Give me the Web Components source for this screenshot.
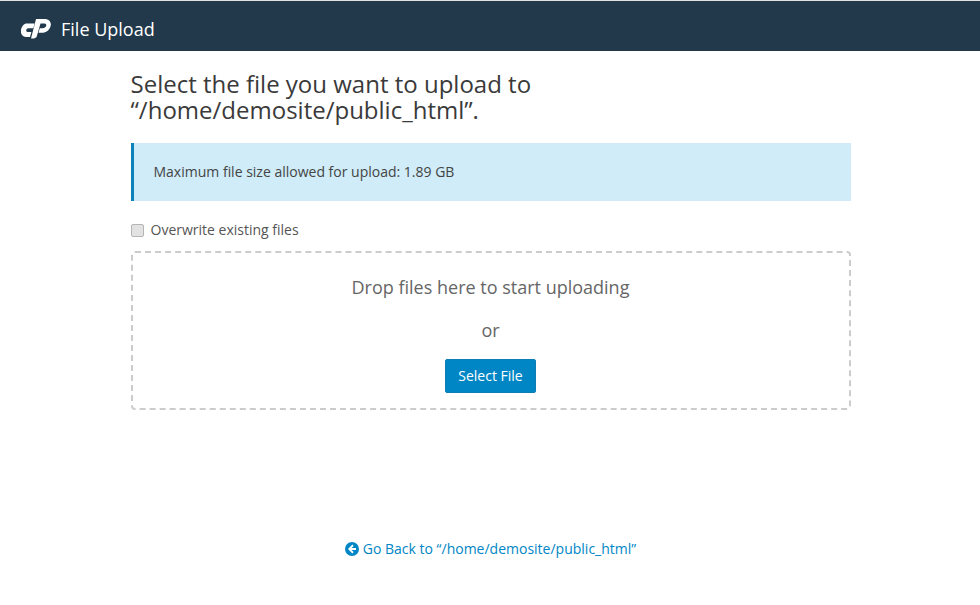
<!DOCTYPE html>
<html>
<head>
<meta charset="utf-8">
<title>File Upload</title>
<style>
    html, body { margin: 0; padding: 0; background: #fff; }
    body { font-family: "Open Sans", sans-serif; font-size: 14px; color: #333; }
</style>
</head>
<body>
<cp-topbar>File Upload</cp-topbar>
<upload-page>
    <upload-heading>Select the file you want to upload to “/home/demosite/public_html”.</upload-heading>
    <info-alert>Maximum file size allowed for upload: 1.89 GB</info-alert>
    <check-option>Overwrite existing files</check-option>
    <drop-zone button="Select File">Drop files here to start uploading</drop-zone>
    <back-link>Go Back to “/home/demosite/public_html”</back-link>
</upload-page>

<script>
class CpTopbar extends HTMLElement {
    constructor() {
        super();
        this.attachShadow({ mode: 'open' });
    }

    connectedCallback() {
        this.shadowRoot.innerHTML = `
            <style>
                :host {
                    display: flex;
                    align-items: center;
                    box-sizing: border-box;
                    height: 51px;
                    padding: 6px 0 0 21px;
                    background-color: #22394b;
                    border-top: 1px solid #e0e0e0;
                    color: #fff;
                    font-size: 18px;
                }
                svg { display: block; width: 30px; height: 20px; margin-right: 10px; }
                span { line-height: 24px; }
            </style>
            <svg viewBox="0 0 30 20" aria-hidden="true">
                <path fill="#fff" d="M5.8 4.5H13.6L12.3 9.2H7.2C6.2 9.2 5.6 10 5.3 11C5 12.2 5.6 13 6.6 13H10.4L9 18H5.5C1.8 18-.8 15-.1 11.2C.6 7.3 3 4.5 5.8 4.5Z"/>
                <path fill="#fff" d="M15 0H23.5C28 0 30.7 3 29.6 7C28.6 11 25 13.8 21 13.8H17.5L18.8 9.2H21.5C23.4 9.2 24.8 8.2 25.2 6.8C25.6 5.4 24.8 4.6 23 4.6H19.5L15.8 17.2C15.4 18.6 14 19.4 12.5 19.4H10Z"/>
            </svg>
            <span><slot></slot></span>
        `;
    }
}

class UploadPage extends HTMLElement {
    constructor() {
        super();
        this.attachShadow({ mode: 'open' });
    }

    connectedCallback() {
        this.shadowRoot.innerHTML = `
            <style>
                :host {
                    display: block;
                    width: 720px;
                    margin: 0 auto;
                    padding-left: 1px;
                    box-sizing: content-box;
                }
            </style>
            <slot></slot>
        `;
    }
}

class UploadHeading extends HTMLElement {
    constructor() {
        super();
        this.attachShadow({ mode: 'open' });
    }

    connectedCallback() {
        this.shadowRoot.innerHTML = `
            <style>
                :host {
                    display: block;
                    padding-top: 20px;
                    font-size: 24px;
                    line-height: 26.4px;
                    color: #3a3a3a;
                }
            </style>
            <slot></slot>
        `;
    }
}

class InfoAlert extends HTMLElement {
    constructor() {
        super();
        this.attachShadow({ mode: 'open' });
    }

    connectedCallback() {
        this.shadowRoot.innerHTML = `
            <style>
                :host {
                    display: block;
                    box-sizing: border-box;
                    height: 58px;
                    margin-top: 19px;
                    padding: 19px 20px;
                    background-color: #cfecf8;
                    border-left: 3px solid #0e83bb;
                    line-height: 20px;
                    color: #444;
                }
            </style>
            <slot></slot>
        `;
    }
}

class CheckOption extends HTMLElement {
    constructor() {
        super();
        this.attachShadow({ mode: 'open' });
    }

    connectedCallback() {
        this.shadowRoot.innerHTML = `
            <style>
                :host {
                    display: flex;
                    align-items: center;
                    height: 20px;
                    margin-top: 19px;
                    color: #555;
                    line-height: 20px;
                }
                input {
                    appearance: none;
                    box-sizing: border-box;
                    width: 13px;
                    height: 13px;
                    margin: 1px 7px 0 0;
                    background-color: #e2e2e2;
                    border: 1px solid #b5b5b5;
                    border-radius: 2px;
                }
            </style>
            <input type="checkbox">
            <span><slot></slot></span>
        `;
    }
}

class DropZone extends HTMLElement {
    constructor() {
        super();
        this.attachShadow({ mode: 'open' });
    }

    connectedCallback() {
        const label = this.getAttribute('button');

        this.shadowRoot.innerHTML = `
            <style>
                :host {
                    display: flex;
                    flex-direction: column;
                    align-items: center;
                    box-sizing: border-box;
                    height: 159px;
                    margin-top: 11px;
                    padding-top: 20px;
                    border: 2px dashed #ccc;
                    border-radius: 4px;
                    color: #666;
                    font-size: 18px;
                }
                .msg { line-height: 28px; }
                .or { margin-top: 15px; line-height: 28px; }
                button {
                    box-sizing: border-box;
                    height: 34px;
                    margin-top: 15px;
                    padding: 0 12px;
                    background-color: #0086c5;
                    border: 1px solid #0e7fb5;
                    border-radius: 2px;
                    color: #fff;
                    font-family: inherit;
                    font-size: 14px;
                    line-height: 20px;
                }
            </style>
            <div class="msg"><slot></slot></div>
            <div class="or">or</div>
            <button type="button">${label}</button>
        `;
    }
}

class BackLink extends HTMLElement {
    constructor() {
        super();
        this.attachShadow({ mode: 'open' });
    }

    connectedCallback() {
        this.shadowRoot.innerHTML = `
            <style>
                :host {
                    display: flex;
                    justify-content: center;
                    align-items: center;
                    height: 20px;
                    margin-top: 129px;
                    color: #0086c5;
                    line-height: 20px;
                }
                svg { display: block; width: 14px; height: 14px; margin-right: 4px; }
            </style>
            <svg viewBox="0 0 14 14" aria-hidden="true">
                <path fill="#0086c5" d="M7 0a7 7 0 1 1 0 14A7 7 0 0 1 7 0ZM7.4 2.6 3 7l4.4 4.4 1.3-1.3-2.2-2.1H11V6H6.5l2.2-2.1Z"/>
            </svg>
            <span><slot></slot></span>
        `;
    }
}

customElements.define('cp-topbar', CpTopbar);
customElements.define('upload-page', UploadPage);
customElements.define('upload-heading', UploadHeading);
customElements.define('info-alert', InfoAlert);
customElements.define('check-option', CheckOption);
customElements.define('drop-zone', DropZone);
customElements.define('back-link', BackLink);
</script>
</body>
</html>
